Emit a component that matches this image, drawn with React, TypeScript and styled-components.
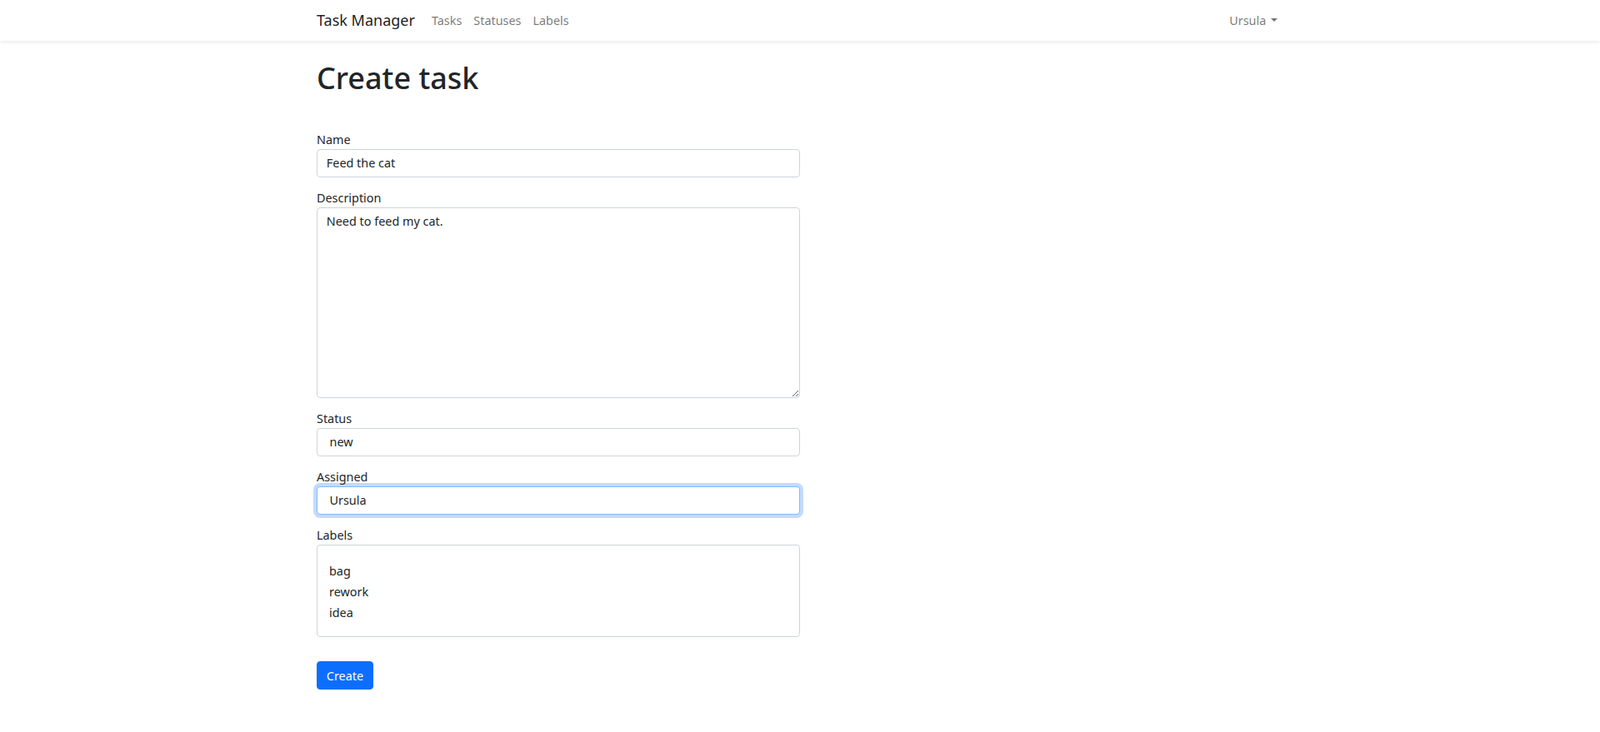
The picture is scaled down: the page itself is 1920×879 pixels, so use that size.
import styled, { createGlobalStyle } from 'styled-components'

const GlobalStyle = createGlobalStyle`
  html { font-size: 16px; }
  body {
    margin: 0;
    background: #fff;
    color: #212529;
    font-family: "Noto Sans", "Open Sans", sans-serif;
    font-size: 0.9rem;
    line-height: 1.5;
  }
  *, *::before, *::after { box-sizing: border-box; }
`

// ─── Navbar ───────────────────────────────────────────────────────────────────

const Navbar = styled.nav`
  background: #fff;
  box-shadow: 0 0.125rem 0.25rem rgba(0, 0, 0, 0.075);
  padding: 8px 0;
`

const Container = styled.div`
  width: 1160px;
  margin: 0 auto;
`

const NavInner = styled(Container)`
  display: flex;
  align-items: center;
  height: 33px;
`

const Brand = styled.a`
  font-size: 18px;
  line-height: 27px;
  margin-right: 13px;
  color: rgba(0, 0, 0, 0.9);
  text-decoration: none;
  white-space: nowrap;
`

const NavList = styled.ul<{ $end?: boolean }>`
  display: flex;
  list-style: none;
  margin: 0;
  padding: 0;
  margin-left: ${p => (p.$end ? 'auto' : '0')};
`

const NavLink = styled.a`
  display: block;
  padding: 4px 7px;
  color: rgba(0, 0, 0, 0.55);
  text-decoration: none;
  cursor: pointer;
`

const Caret = styled.span`
  display: inline-block;
  margin-left: 0.4em;
  vertical-align: 0.255em;
  border-top: 0.3em solid;
  border-right: 0.3em solid transparent;
  border-left: 0.3em solid transparent;
`

// ─── Form ─────────────────────────────────────────────────────────────────────

const Main = styled(Container)`
  padding-top: 23px;
`

const Title = styled.h1`
  margin: 0 0 41.8px;
  font-size: 36px;
  font-weight: 500;
  line-height: 1.2;
`

const Form = styled.form`
  width: 50%;
`

const Field = styled.div`
  margin-bottom: 14.5px;
`

const Label = styled.label`
  display: block;
  line-height: 21.6px;
`

const controlBase = `
  display: block;
  width: 100%;
  height: 34px;
  padding: 0 10.8px;
  font-family: inherit;
  font-size: 0.9rem;
  line-height: 1.5;
  color: #212529;
  background: #fff;
  border: 1px solid #ced4da;
  border-radius: 0.25rem;
  outline: none;
`

const Input = styled.input`
  ${controlBase}
`

const TextArea = styled.textarea`
  ${controlBase}
  height: 229px;
  padding-top: 5px;
  padding-bottom: 5px;
  resize: vertical;
`

const Select = styled.select<{ $focused?: boolean }>`
  ${controlBase}
  appearance: none;
  padding-left: 14.5px;
  border-color: ${p => (p.$focused ? '#86b7fe' : '#ced4da')};
  box-shadow: ${p => (p.$focused ? '0 0 0 0.25rem rgba(13, 110, 253, 0.25)' : 'none')};
`

const ListBox = styled.div`
  height: 111px;
  padding: 18.5px 14px 0;
  border: 1px solid #ced4da;
  border-radius: 0.25rem;
  overflow: hidden;
`

const ListOption = styled.div`
  line-height: 25px;
  cursor: default;
`

const Button = styled.button`
  display: inline-block;
  height: 34px;
  margin-top: 15px;
  padding: 0 10.8px;
  font-family: inherit;
  font-size: 0.9rem;
  line-height: 1.5;
  color: #fff;
  background: #0d6efd;
  border: 1px solid #0d6efd;
  border-radius: 0.25rem;
  cursor: pointer;
`

const LABELS = ['bag', 'rework', 'idea']

export default function App() {
  return (
    <>
      <GlobalStyle />
      <Navbar>
        <NavInner>
          <Brand href="#">Task Manager</Brand>
          <NavList>
            <li><NavLink>Tasks</NavLink></li>
            <li><NavLink>Statuses</NavLink></li>
            <li><NavLink>Labels</NavLink></li>
          </NavList>
          <NavList $end>
            <li>
              <NavLink>Ursula<Caret /></NavLink>
            </li>
          </NavList>
        </NavInner>
      </Navbar>

      <Main>
        <Title>Create task</Title>
        <Form onSubmit={e => e.preventDefault()}>
          <Field>
            <Label htmlFor="name">Name</Label>
            <Input id="name" defaultValue="Feed the cat" />
          </Field>
          <Field>
            <Label htmlFor="description">Description</Label>
            <TextArea id="description" defaultValue="Need to feed my cat." />
          </Field>
          <Field>
            <Label htmlFor="status">Status</Label>
            <Select id="status" defaultValue="new">
              <option value="new">new</option>
            </Select>
          </Field>
          <Field>
            <Label htmlFor="assigned">Assigned</Label>
            <Select id="assigned" defaultValue="Ursula" $focused>
              <option value="Ursula">Ursula</option>
            </Select>
          </Field>
          <Field>
            <Label>Labels</Label>
            <ListBox role="listbox" aria-multiselectable="true">
              {LABELS.map(l => (
                <ListOption key={l} role="option">{l}</ListOption>
              ))}
            </ListBox>
          </Field>
          <Button type="submit">Create</Button>
        </Form>
      </Main>
    </>
  )
}
